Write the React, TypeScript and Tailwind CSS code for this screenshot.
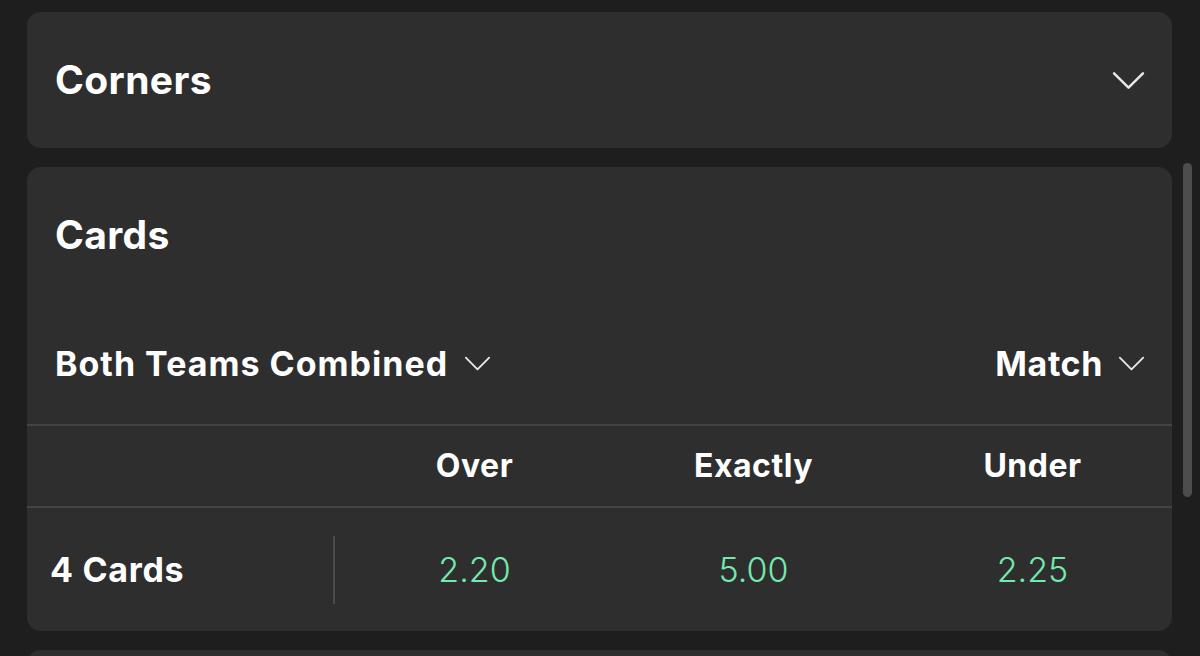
import React from "react";

function Chevron({ className, sw = 2.4 }: { className?: string; sw?: number }) {
  return (
    <svg viewBox="0 0 32 18" className={className} fill="none" stroke="currentColor" strokeWidth={sw} strokeLinecap="round" strokeLinejoin="round">
      <path d="M2 2 L16 16 L30 2" />
    </svg>
  );
}

export default function App() {
  const font = { fontFamily: "Inter, 'Noto Sans', sans-serif" };
  return (
    <div className="w-[1200px] h-[656px] bg-[#1e1e1e] overflow-hidden relative text-white" style={font}>
      <div className="flex flex-col gap-[19px] pt-[12px] pl-[27px] w-[1172px]">
        <div className="h-[136px] rounded-[14px] bg-[#2e2e2e] flex items-center justify-between pl-[28px] pr-[27px]">
          <div className="text-[39px] font-bold tracking-[0.4px]">Corners</div>
          <Chevron className="w-[33px] h-[19px] text-[#e8e8e8]" />
        </div>
        <div className="rounded-[14px] bg-[#2e2e2e] flex flex-col">
          <div className="h-[136px] flex items-center pl-[28px]">
            <div className="text-[39px] font-bold tracking-[0.4px]">Cards</div>
          </div>
          <div className="h-[121px] flex items-center justify-between pl-[28px] pr-[27px]">
            <div className="flex items-center gap-[16px]">
              <span className="text-[34px] font-bold tracking-[1px]">Both Teams Combined</span>
              <Chevron className="w-[27px] h-[15px] text-[#e8e8e8]" sw={2.2} />
            </div>
            <div className="flex items-center gap-[15px]">
              <span className="text-[34px] font-bold tracking-[0.6px]">Match</span>
              <Chevron className="w-[27px] h-[15px] text-[#e8e8e8]" sw={2.2} />
            </div>
          </div>
          <div className="h-[2px] bg-[#444444]" />
          <div className="h-[80px] grid grid-cols-[308px_1fr_1fr_1fr] items-center text-[32px] font-bold tracking-[0.5px]">
            <div />
            <div className="text-center">Over</div>
            <div className="text-center">Exactly</div>
            <div className="text-center">Under</div>
          </div>
          <div className="h-[2px] bg-[#444444]" />
          <div className="h-[123px] grid grid-cols-[308px_1fr_1fr_1fr] items-center">
            <div className="h-[68px] flex items-center pl-[23px] border-r-2 border-[#4a4a4a] text-[34px] font-bold tracking-[0.7px]">4 Cards</div>
            <div className="text-center text-[34px] font-light text-[#74e8ad]">2.20</div>
            <div className="text-center text-[34px] font-light text-[#74e8ad]">5.00</div>
            <div className="text-center text-[34px] font-light text-[#74e8ad]">2.25</div>
          </div>
        </div>
        <div className="h-[60px] rounded-[14px] bg-[#2e2e2e]" />
      </div>
      <div className="absolute left-[1183px] top-[163px] w-[9px] h-[334px] rounded-full bg-[#4d4d4d]" />
    </div>
  );
}
